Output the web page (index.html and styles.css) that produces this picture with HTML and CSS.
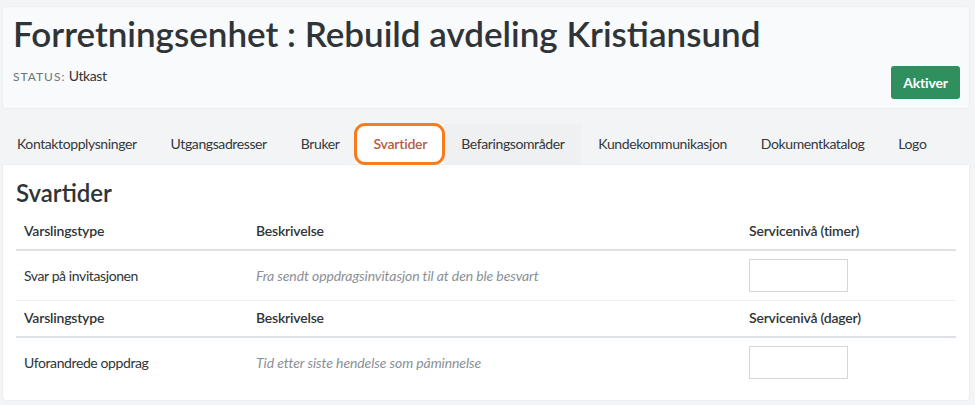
FILE: index.html
```html
<!DOCTYPE html>
<html lang="no">
<head>
  <meta charset="UTF-8">
  <title>Forretningsenhet : Rebuild avdeling Kristiansund</title>
  <link rel="stylesheet" href="styles.css">
</head>
<body>
  <div class="page">
    <div class="header-card">
      <div class="header-text">
        <h1 class="title">Forretningsenhet : Rebuild avdeling Kristiansund</h1>
        <div class="status"><span class="status-label">STATUS:</span> Utkast</div>
      </div>
      <button class="btn-activate">Aktiver</button>
    </div>

    <!-- Tabs -->
    <ul class="tabs">
      <li class="tab">Kontaktopplysninger</li>
      <li class="tab">Utgangsadresser</li>
      <li class="tab">Bruker</li>
      <li class="tab tab-active">Svartider</li>
      <li class="tab tab-hover">Befaringsområder</li>
      <li class="tab">Kundekommunikasjon</li>
      <li class="tab">Dokumentkatalog</li>
      <li class="tab">Logo</li>
    </ul>

    <div class="content-card">
      <h2 class="section-title">Svartider</h2>
      <table class="times">
        <colgroup>
          <col class="col-type">
          <col class="col-desc">
          <col class="col-level">
        </colgroup>
        <thead>
          <tr>
            <th>Varslingstype</th>
            <th>Beskrivelse</th>
            <th>Servicenivå (timer)</th>
          </tr>
        </thead>
        <tbody>
          <tr>
            <td>Svar på invitasjonen</td>
            <td class="desc">Fra sendt oppdragsinvitasjon til at den ble besvart</td>
            <td><input type="text" class="level-input"></td>
          </tr>
        </tbody>
        <thead>
          <tr>
            <th>Varslingstype</th>
            <th>Beskrivelse</th>
            <th>Servicenivå (dager)</th>
          </tr>
        </thead>
        <tbody>
          <tr>
            <td>Uforandrede oppdrag</td>
            <td class="desc">Tid etter siste hendelse som påminnelse</td>
            <td><input type="text" class="level-input"></td>
          </tr>
        </tbody>
      </table>
    </div>
  </div>
</body>
</html>
```

FILE: styles.css
```css
body {
  margin: 0;
  background-color: #f3f4f6;
  font-family: Lato, "Liberation Sans", sans-serif;
  color: #2f3438;
  letter-spacing: -0.4px;
}
.page {
  padding: 6px 5px 0 2px;
}
.header-card {
  display: flex;
  justify-content: space-between;
  align-items: flex-end;
  padding: 5px 9px 9px 10px;
  background-color: #f9fafb;
  border: 1px solid #eceef0;
  border-radius: 4px;
}
.title {
  margin: 0;
  font-size: 35px;
  font-weight: 600;
  line-height: 1.2;
  letter-spacing: 0;
  color: #2f3438;
}
.status {
  margin-top: 13px;
  margin-bottom: 15px;
  font-size: 14px;
}
.status-label {
  font-size: 12px;
  letter-spacing: 1px;
  color: #6c737a;
}
.btn-activate {
  width: 69px;
  height: 33px;
  border: none;
  border-radius: 3px;
  background-color: #2f8f5f;
  color: #fff;
  font-family: inherit;
  font-size: 14px;
  font-weight: 700;
  letter-spacing: -0.2px;
  cursor: pointer;
}
.tabs {
  display: flex;
  margin: 15px 0 0 -2px;
  padding: 0;
  list-style: none;
}
.tab {
  padding: 0 17px;
  height: 40px;
  line-height: 40px;
  font-size: 14px;
  color: #33383c;
}
.tab-hover {
  background-color: #eef0f2;
}
.tab-active {
  position: relative;
  background-color: #fff;
  color: #b75a3e;
  font-weight: 600;
  letter-spacing: -0.2px;
}
.tab-active::after {
  content: "";
  position: absolute;
  top: -1px;
  left: -2px;
  right: -1px;
  bottom: -1px;
  border: 3px solid #f57c1f;
  border-radius: 11px;
}
.content-card {
  padding: 12px 13px 13px 13px;
  background-color: #fff;
  border: 1px solid #eceef0;
  border-radius: 0 0 4px 4px;
}
.section-title {
  margin: 0 0 5px 0;
  font-size: 24px;
  font-weight: 600;
  line-height: 31px;
  letter-spacing: 0;
}
.times {
  width: 100%;
  border-collapse: collapse;
  font-size: 14px;
}
.col-type {
  width: 232px;
}
.col-level {
  width: 215px;
}
.times th {
  padding: 8px;
  line-height: 20px;
  text-align: left;
  font-weight: 600;
  letter-spacing: -0.2px;
  border-bottom: 2px solid #dee2e6;
}
.times tbody + thead th {
  padding-top: 7px;
}
.times td {
  padding: 8px;
  vertical-align: middle;
  border-bottom: 1px solid #eef0f2;
}
.times tbody:last-child td {
  border-bottom: none;
}
.desc {
  font-style: italic;
  letter-spacing: -0.1px;
  color: #8a9096;
}
.level-input {
  display: block;
  box-sizing: border-box;
  width: 99px;
  height: 33px;
  border: 1px solid #d4d7da;
  border-radius: 0;
}
```
